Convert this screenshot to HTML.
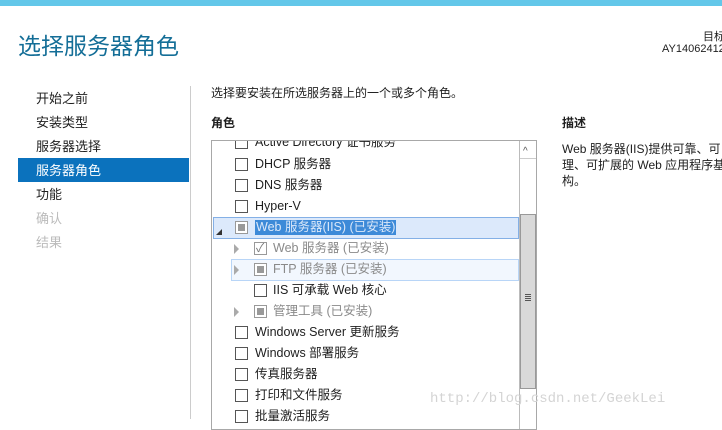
<!DOCTYPE html>
<html><head><meta charset="utf-8"><style>
*{margin:0;padding:0;box-sizing:border-box}
body{width:722px;height:419px;overflow:hidden;background:#fff;font-family:"Liberation Sans","Noto Sans CJK SC",sans-serif;font-size:12px;line-height:15px;color:#1e1e1e;position:relative}
.a{position:absolute;white-space:nowrap}
.cb{position:absolute;width:13px;height:13px;border:1px solid #555;background:#fff}
.row{position:absolute;left:0;height:21px;width:306px}
.t{position:absolute;top:3px;white-space:nowrap;font-size:12.5px;line-height:15px}
.g{color:#8a8a8a}
.inner{position:absolute;left:2px;top:2px;width:7px;height:7px;background:#999}
.tr{position:absolute;width:0;height:0;border-left:5px solid #aaa;border-top:5px solid transparent;border-bottom:5px solid transparent}
</style></head><body>
<div class="a" style="left:0;top:0;width:722px;height:6px;background:#63c7e9"></div>
<div class="a" style="left:18px;top:32px;font-size:23px;line-height:28px;color:#146e97">选择服务器角色</div>
<div class="a" style="left:703px;top:31px;font-size:11px;line-height:12px">目标</div>
<div class="a" style="left:662px;top:43px;font-size:11px;line-height:12px">AY14062412</div>
<div class="a" style="left:190px;top:86px;width:1px;height:333px;background:#ccc"></div>
<div class="a" style="left:36px;top:91px;font-size:13px">开始之前</div>
<div class="a" style="left:36px;top:115px;font-size:13px">安装类型</div>
<div class="a" style="left:36px;top:139px;font-size:13px">服务器选择</div>
<div class="a" style="left:18px;top:158px;width:171px;height:24px;background:#0b72bd"></div>
<div class="a" style="left:36px;top:163px;font-size:13px;color:#fff">服务器角色</div>
<div class="a" style="left:36px;top:187px;font-size:13px">功能</div>
<div class="a" style="left:36px;top:211px;font-size:13px;color:#bbb">确认</div>
<div class="a" style="left:36px;top:235px;font-size:13px;color:#bbb">结果</div>
<div class="a" style="left:211px;top:86px;font-size:12px">选择要安装在所选服务器上的一个或多个角色。</div>
<div class="a" style="left:211px;top:116px;font-weight:bold">角色</div>
<div class="a" style="left:562px;top:116px;font-weight:bold">描述</div>
<div class="a" style="left:562px;top:141px;line-height:16px;font-size:12px">Web 服务器(IIS)提供可靠、可<br>理、可扩展的 Web 应用程序基<br>构。</div>
<div class="a" style="left:211px;top:140px;width:326px;height:290px;border:1px solid #a8a8a8;overflow:hidden;background:#fff">
 <div class="row" style="top:-9px"><div class="cb" style="left:23px;top:4px"></div><div class="t" style="left:43px">Active Directory 证书服务</div></div>
 <div class="row" style="top:13px"><div class="cb" style="left:23px;top:4px"></div><div class="t" style="left:43px">DHCP 服务器</div></div>
 <div class="row" style="top:34px"><div class="cb" style="left:23px;top:4px"></div><div class="t" style="left:43px">DNS 服务器</div></div>
 <div class="row" style="top:55px"><div class="cb" style="left:23px;top:4px"></div><div class="t" style="left:43px">Hyper-V</div></div>
 <div class="row" style="top:76px;left:1px;width:306px;height:22px;background:#dce9fb;border:1px solid #84b0e6"></div>
 <div class="a" style="left:4px;top:88px;width:0;height:0;border-left:6px solid transparent;border-bottom:6px solid #333"></div>
 <div class="cb" style="left:23px;top:80px;border-color:#999"><div class="inner"></div></div>
 <div class="a" style="left:43px;top:79px;font-size:12.5px;background:#3d8ad8;color:#dbe8f9;padding:0 1px">Web 服务器(IIS) (已安装)</div>
 <div class="tr" style="left:22px;top:103px"></div>
 <div class="cb" style="left:42px;top:101px;border-color:#999"></div><div class="a" style="left:44px;top:100px;color:#777;font-size:12px">✓</div>
 <div class="a g" style="left:61px;top:100px;font-size:12.5px">Web 服务器 (已安装)</div>
 <div class="row" style="top:118px;left:19px;width:288px;height:22px;background:#f2f7fe;border:1px solid #b8d5f7"></div>
 <div class="tr" style="left:22px;top:124px"></div>
 <div class="cb" style="left:42px;top:122px;border-color:#999"><div class="inner"></div></div>
 <div class="a g" style="left:61px;top:121px;font-size:12.5px">FTP 服务器 (已安装)</div>
 <div class="row" style="top:139px"><div class="cb" style="left:42px;top:4px"></div><div class="t" style="left:61px">IIS 可承载 Web 核心</div></div>
 <div class="tr" style="left:22px;top:166px"></div>
 <div class="cb" style="left:42px;top:164px;border-color:#999"><div class="inner"></div></div>
 <div class="a g" style="left:61px;top:163px;font-size:12.5px">管理工具 (已安装)</div>
 <div class="row" style="top:181px"><div class="cb" style="left:23px;top:4px"></div><div class="t" style="left:43px">Windows Server 更新服务</div></div>
 <div class="row" style="top:202px"><div class="cb" style="left:23px;top:4px"></div><div class="t" style="left:43px">Windows 部署服务</div></div>
 <div class="row" style="top:223px"><div class="cb" style="left:23px;top:4px"></div><div class="t" style="left:43px">传真服务器</div></div>
 <div class="row" style="top:244px"><div class="cb" style="left:23px;top:4px"></div><div class="t" style="left:43px">打印和文件服务</div></div>
 <div class="row" style="top:265px"><div class="cb" style="left:23px;top:4px"></div><div class="t" style="left:43px">批量激活服务</div></div>
 <div class="a" style="left:307px;top:0;width:17px;height:290px;border-left:1px solid #bbb;background:#fff"></div>
 <div class="a" style="left:311px;top:3px;color:#555;font-size:10px">^</div>
 <div class="a" style="left:308px;top:17px;width:16px;height:1px;background:#ccc"></div>
 <div class="a" style="left:308px;top:73px;width:16px;height:175px;background:#d9d9d9;border:1px solid #999"></div>
 <div class="a" style="left:313px;top:153px;width:6px;height:8px;background:repeating-linear-gradient(#555 0 1px,transparent 1px 2px)"></div>
</div>
<div class="a" style="left:430px;top:392px;font-family:'Liberation Mono',monospace;font-size:14px;color:#d4d4d4">http://blog.csdn.net/GeekLei</div>
</body></html>
